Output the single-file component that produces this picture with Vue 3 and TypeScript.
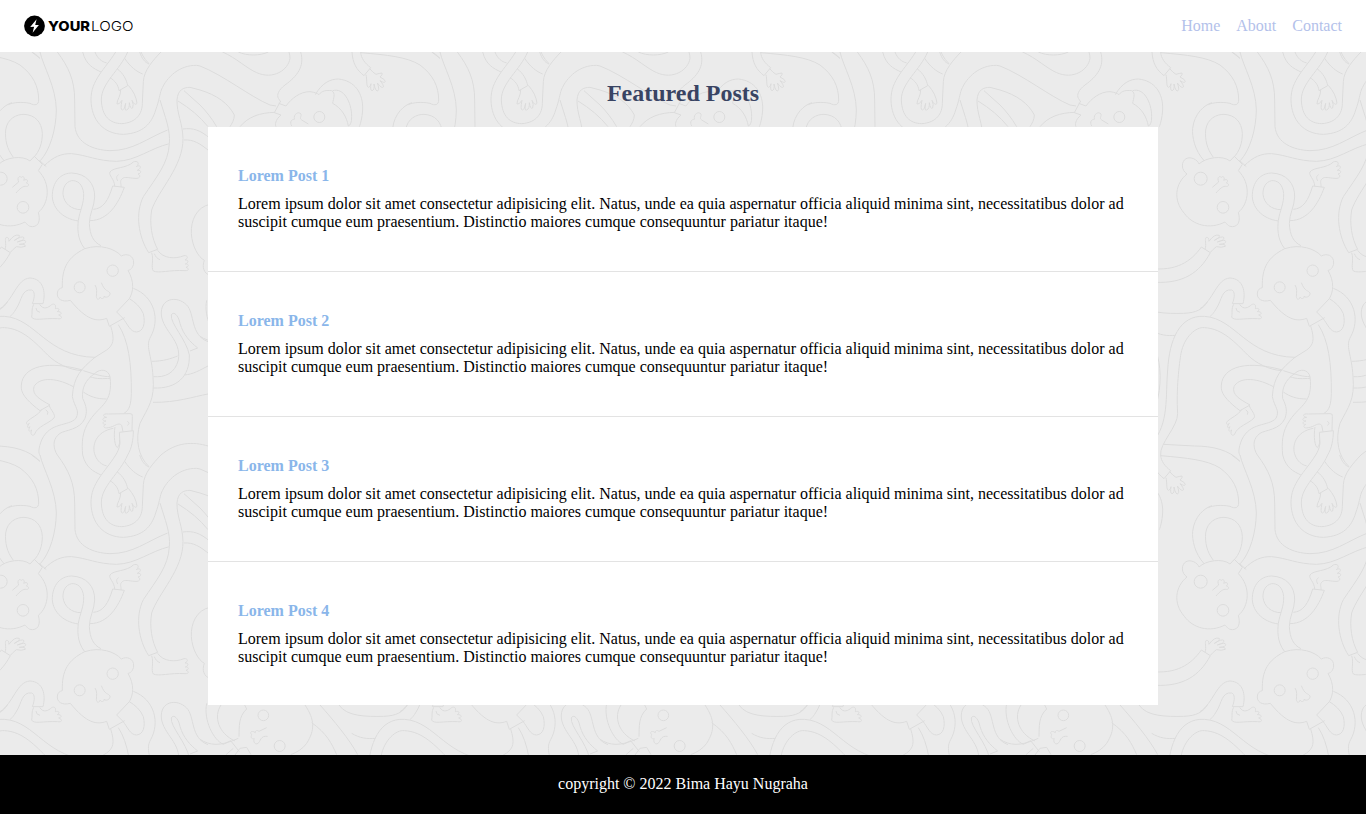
<script setup lang="ts">
interface Post {
  id: number
  title: string
  body: string
}

interface Offset {
  x: number
  y: number
}

const links: string[] = ['Home', 'About', 'Contact']

const body =
  'Lorem ipsum dolor sit amet consectetur adipisicing elit. Natus, unde ea quia aspernatur officia aliquid minima sint, necessitatibus dolor ad suscipit cumque eum praesentium. Distinctio maiores cumque consequuntur pariatur itaque!'

const posts: Post[] = [1, 2, 3, 4].map((id) => ({ id, title: `Lorem Post ${id}`, body }))

// The doodle repeats every 400 x 403 pixels.
const tiles: Offset[] = []
for (let row = -1; row <= 1; row++) {
  for (let col = -1; col <= 3; col++) {
    tiles.push({ x: col * 400, y: row * 403 })
  }
}
</script>

<template>
  <div class="page">
    <svg class="doodles" width="1366" height="814" viewBox="0 0 1366 814" aria-hidden="true">
      <defs>
        <g id="doodle" transform="scale(0.33333)">
          <!-- looping arms, long leg -->
          <g transform="translate(0 150)">
            <path d="M40 322C20 295 15 270 17 240C22 205 50 193 72 193C105 195 125 215 127 250C127 280 118 305 101 322" />
            <path d="M120 6C130 50 168 110 169 180C168 240 150 300 121 332" />
            <path d="M172 6C205 50 224 90 224 150L225 230C230 280 280 300 330 302C400 302 440 265 503 240" />
            <path d="M132 348C160 320 185 310 215 311C260 315 290 333 350 334C410 332 450 295 508 281" />
            <path d="M347 6C315 58 272 90 273 150C274 210 310 252 370 253C430 250 455 220 467 180C478 150 480 130 484 120C500 80 540 45 590 46L600 48" />
            <path d="M383 6C360 60 303 100 304 150C306 200 330 220 365 221C410 218 427 190 427 160L430 95C432 60 460 30 483 6" />
            <path d="M480 150C495 200 512 240 508 281C505 340 470 380 430 440C405 490 415 560 446 608L473 598C455 565 448 520 455 480C475 420 550 350 549 265C548 220 530 190 531 150C533 120 550 112 570 112L600 120" />
            <path d="M552 122L600 165C620 185 635 205 650 230M534 153C570 175 600 200 624 230" />
            <path d="M549 237C580 233 600 240 630 265M552 270C580 268 600 280 630 305" />
            <path d="M330 83C345 92 355 105 357 122L383 107C380 90 370 70 352 57" />
            <path d="M362 119C363 138 350 150 351 162Q357 165 366 151Q360 180 367 180Q373 180 377 160Q372 184 380 180Q389 176 388 158Q391 179 398 174Q402 164 396 151Q405 169 411 160Q408 132 385 106" />
            <path d="M248 6C258 45 280 55 303 66M285 6C292 25 305 35 320 39M374 25C390 50 410 65 428 72M419 6C425 25 435 38 447 42" />
          </g>
          <!-- bear head and its arm -->
          <g transform="translate(-132 150)">
            <path d="M93 372C75 360 75 335 90 326C105 318 125 330 129 342C150 322 200 315 222 333L235 319L259 343L247 362C285 400 280 460 247 487C253 510 250 528 230 530C215 530 212 520 207 516C160 540 110 525 85 490C50 450 58 400 93 372Z" />
            <circle cx="134" cy="386" r="19.500" />
            <circle cx="201" cy="472" r="17.500" />
            <path d="M169 412L188 396C183 384 188 376 196 382C201 377 208 382 203 391C212 386 220 391 211 399C221 401 219 410 211 409C202 407 191 416 180 429" />
            <path d="M145 333C115 300 108 260 110 235C115 190 145 165 168 158M250 331L271 350" />
            <path d="M-20 655C60 665 105 635 136 591L163 608C130 670 80 700 0 697" />
            <path d="M147 598C153 582 144 568 151 562Q159 561 159 574Q175 551 190 556Q192 563 175 571Q199 556 204 563Q206 570 184 576Q208 567 209 574Q210 582 190 583Q209 581 208 589Q196 594 181 590Q171 598 163 607" />
          </g>
          <!-- round head with the looped tail, feet -->
          <g transform="translate(0 321)">
            <path d="M187 542C185 480 205 450 254 425C300 410 345 425 364 447C380 438 402 445 401 468C400 482 390 490 384 490C404 525 400 555 388 575L350 615L369 634C382 650 390 675 410 675C430 673 437 650 430 620C422 600 405 585 388 575M328 658L374 632M328 658L320 634C290 645 260 640 211 580C185 587 170 575 172 558C173 548 180 543 187 542" />
            <circle cx="338" cy="491" r="17" />
            <circle cx="239" cy="541" r="16.500" />
            <path d="M285 534C292 545 290 555 289 568C289 580 300 578 300 570C305 578 313 575 312 568C320 575 332 566 330 558C324 549 315 555 304 527" />
            <path d="M254 425C230 395 233 360 235 340C240 310 252 290 251 260C248 230 232 220 215 221C195 225 188 245 189 262C192 290 215 308 243 308" />
            <path d="M235 342C185 335 155 300 157 262C160 215 190 198 215 198C260 200 285 230 284 270C283 300 268 320 268 350C270 385 280 405 303 416" />
            <path d="M280 307C310 305 325 280 338 237L373 241C355 290 325 340 270 341" />
            <path d="M344 237C343 215 325 205 330 195C340 180 380 185 400 165C412 160 421 168 409 179C423 171 426 184 412 190C426 189 425 199 414 201C424 205 420 216 405 214C385 213 375 208 367 215C358 222 364 230 363 240M356 203C347 208 350 215 353 222" />
            <path d="M455 437C462 460 452 480 460 492C475 500 510 488 555 491C568 492 567 483 558 481C568 478 567 470 556 471C567 467 566 458 555 459C565 454 565 445 552 446C525 457 490 455 473 430M463 440C467 450 472 455 480 458" />
            <path d="M630 292C590 300 572 340 574 380C577 420 595 450 613 460C605 480 612 500 630 505" />
            <path d="M0 605C40 580 50 515 90 513C130 515 138 555 129 590L97 590C105 570 105 552 95 549C65 545 65 580 50 603C40 620 35 625 30 628" />
            <path d="M101 592C93 605 98 620 95 630C100 643 130 633 172 635C188 638 188 628 176 624C187 622 186 613 172 614C182 607 175 602 166 605C169 594 163 588 155 593C145 602 130 610 119 592M108 603Q108 614 120 616" />
          </g>
          <!-- long arm on the left -->
          <g transform="translate(-132 840)">
            <path d="M-12 490C40 430 28 350 35 270C40 180 70 105 145 109C240 115 270 230 418 232" />
            <path d="M14 525C10 490 66 440 65 400C60 330 70 250 75 220C85 170 120 140 145 143C200 145 240 190 275 225C300 250 340 270 378 272" />
            <path d="M22 493L115 498C170 498 220 510 252 544" />
            <path d="M0 215C15 250 18 320 0 375" />
          </g>
          <!-- body, legs and curls -->
          <g transform="translate(0 840)">
            <path d="M332 138C345 180 340 195 320 210L285 232C245 265 220 290 217 350C225 385 240 390 228 415C205 440 150 425 125 480C115 505 115 520 120 526" />
            <path d="M330 290C325 268 300 265 285 280C255 300 245 325 248 355C260 380 262 395 255 415C240 450 195 450 180 460C160 475 158 495 168 518L172 525" />
            <path d="M330 290C340 370 300 375 270 420C245 455 245 490 248 525" />
            <path d="M248 270C120 235 60 270 64 325C65 345 90 370 120 392L150 375C120 358 95 345 102 320C115 295 160 288 220 320" />
            <path d="M250 272C290 285 310 290 330 290M270 290C290 298 310 296 330 295M250 336C270 350 290 357 320 357" />
            <path d="M125 389C115 405 95 412 82 424C76 432 81 436 88 430C79 441 83 447 90 440C83 453 88 457 95 450C90 462 95 469 103 464C112 438 145 432 162 414C169 405 150 387 148 377M137 389Q148 396 142 404" />
            <path d="M355 134C385 180 395 250 394 340C393 370 390 390 372 400" />
            <path d="M400 25C465 50 480 120 452 170C435 200 455 220 459 290C465 360 445 380 420 430C405 480 415 530 447 560" />
            <path d="M483 525C530 485 580 485 624 498L668 525" />
            <path d="M390 401L325 402C305 400 308 410 320 412C305 413 305 423 318 423C306 425 306 434 317 433C306 440 314 446 325 443C345 440 355 425 365 436L369 455M390 401Q399 400 397 410L396 452M382 424Q392 430 382 436" />
            <path d="M358 457L400 452C400 480 395 505 383 525M358 457L360 490C358 505 352 518 347 525" />
            <path d="M345 441C340 470 345 500 352 503C358 495 360 490 358 480M340 445C285 455 275 500 285 525" />
            <path d="M624 185C570 165 585 100 560 75C530 45 480 55 484 105C490 155 545 180 535 240C525 280 495 293 460 290" />
            <path d="M460 324C530 327 570 290 568 225C560 180 510 130 514 105C520 92 535 105 540 130C550 165 570 185 593 204L570 213" />
            <path d="M455 244C490 244 515 235 533 228M459 367C530 368 580 350 624 342M553 285C580 283 600 270 624 258" />
          </g>
          <!-- upper middle: second bear and open hand -->
          <g transform="translate(600 150)">
            <path d="M0 48C70 75 150 140 210 165L228 168M0 120C50 135 85 160 103 195C103 210 95 222 90 230" />
            <path d="M68 6C110 25 140 55 170 68C220 90 265 60 270 25Q270 15 267 6M115 6C140 18 180 18 205 6" />
            <path d="M302 6C315 50 290 80 255 105C235 120 230 135 235 145L242 155" />
            <path d="M242 153L223 188L243 195C225 210 225 225 228 230M236 160L258 168C275 145 300 125 330 125C345 127 352 130 357 134C365 122 380 120 395 122C408 130 400 145 398 160C425 175 440 200 445 228" />
            <path d="M346 134C365 100 390 87 415 87C465 92 490 130 488 180C486 205 482 220 478 230" />
            <path d="M398 122C430 112 455 155 455 200Q455 225 445 228M120 230C145 200 180 188 225 187" />
            <circle cx="358" cy="201" r="16.500" />
            <path d="M275 228C268 215 275 208 283 208C280 192 295 183 303 192C305 200 297 204 305 210L325 222" />
            <path d="M456 6C458 40 470 60 492 77L512 53C495 40 483 25 482 6" />
            <path d="M482 8C560 15 620 20 660 45C700 75 716 110 716 150C716 165 705 168 690 160C665 155 640 157 625 164" />
            <path d="M498 74C502 91 498 112 506 112Q512 110 513 101Q510 122 516 122Q524 121 522 102Q528 128 534 122Q539 118 532 99Q546 117 550 111Q552 106 540 92Q555 101 556 94Q555 88 540 81Q549 74 546 69Q538 70 528 73Q519 68 509 56" />
            <path d="M695 6L720 25" />
          </g>
          <!-- lower middle: upside-down bear -->
          <g transform="translate(600 891)">
            <path d="M20 10C10 60 40 120 70 133M0 118C30 137 60 140 115 115M63 15C40 50 55 100 105 123M140 27C115 50 118 80 117 110M134 15L140 27" />
            <path d="M70 133L92 122L118 155M78 164L100 145M105 165L120 145L140 142L153 164" />
            <path d="M315 15C345 60 345 90 320 130C310 145 290 158 272 164" />
            <circle cx="190" cy="46" r="16" />
            <circle cx="239" cy="138" r="16.500" />
            <path d="M200 83L177 94C169 89 166 92 166 98C155 90 148 96 155 104C151 113 155 118 163 116C158 125 166 136 174 130C182 125 180 106 203 109" />
            <path d="M360 15C400 60 450 120 473 164M335 68C380 100 395 130 410 164" />
            <path d="M417 15C440 50 500 50 550 49C590 48 610 35 622 15M455 100C480 115 500 117 527 115" />
          </g>
        </g>
      </defs>
      <use v-for="(t, i) in tiles" :key="i" href="#doodle" :x="t.x" :y="t.y" />
    </svg>

    <header class="bar">
      <svg class="logo" width="112" height="24" viewBox="0 0 112 24" role="img" aria-label="Your logo">
        <circle cx="10.500" cy="12" r="10.400" fill="#000" />
        <path d="M12.600 5.200L6.200 13.100L10.100 12.800L8.600 18.800L14.900 10.900L11.200 11.100Z" fill="#fff" />
        <text class="logo-bold" x="24" y="17" textLength="42" lengthAdjust="spacingAndGlyphs">YOUR</text>
        <text class="logo-thin" x="67" y="17" textLength="42.500" lengthAdjust="spacingAndGlyphs">LOGO</text>
      </svg>
      <nav class="links">
        <a v-for="link in links" :key="link" class="link">{{ link }}</a>
      </nav>
    </header>

    <main class="content">
      <h2 class="heading">Featured Posts</h2>
      <section class="posts">
        <article v-for="post in posts" :key="post.id" class="post">
          <h3 class="title">{{ post.title }}</h3>
          <p class="text">{{ post.body }}</p>
        </article>
      </section>
    </main>

    <footer class="footer">copyright © 2022 Bima Hayu Nugraha</footer>
  </div>
</template>

<style>
body {
  margin: 0;
  background: #ebebeb;
}
</style>

<style scoped>
.page {
  position: relative;
  display: flex;
  flex-direction: column;
  height: 814px;
  overflow: hidden;
  background: #ebebeb;
  color: #000;
  font-family: 'Liberation Serif', 'Times New Roman', serif;
  font-size: 16px;
  line-height: 18px;
}

.doodles {
  position: absolute;
  inset: 0;
  fill: none;
  stroke: #dcdcdc;
  stroke-width: 3;
  stroke-linejoin: round;
}

.bar {
  position: relative;
  display: flex;
  align-items: center;
  justify-content: space-between;
  box-sizing: border-box;
  height: 52px;
  padding: 0 24px;
  background: #fff;
}

.logo {
  font-family: Inter, 'Open Sans', sans-serif;
  font-size: 13.500px;
}

.logo-bold {
  font-weight: 800;
}

.logo-thin {
  font-weight: 300;
}

.links {
  display: flex;
  gap: 16px;
}

.link {
  color: #b3c1ea;
}

.content {
  position: relative;
  flex: 1;
}

.heading {
  margin: 27px 0 20px;
  color: #394463;
  font-size: 24px;
  line-height: 28px;
  text-align: center;
}

.posts {
  width: 950px;
  margin: 0 auto;
  background: #fff;
}

.post {
  padding: 40px 30px;
  border-bottom: 1px solid #e3e3e3;
}

.post:last-child {
  padding-bottom: 39px;
  border-bottom: 0;
}

.title {
  margin: 0 0 10px;
  color: #8ab6ea;
  font-size: 16px;
}

.text {
  margin: 0;
}

.footer {
  position: relative;
  box-sizing: border-box;
  height: 59px;
  padding: 20px 0;
  background: #000;
  color: #fff;
  text-align: center;
}
</style>
